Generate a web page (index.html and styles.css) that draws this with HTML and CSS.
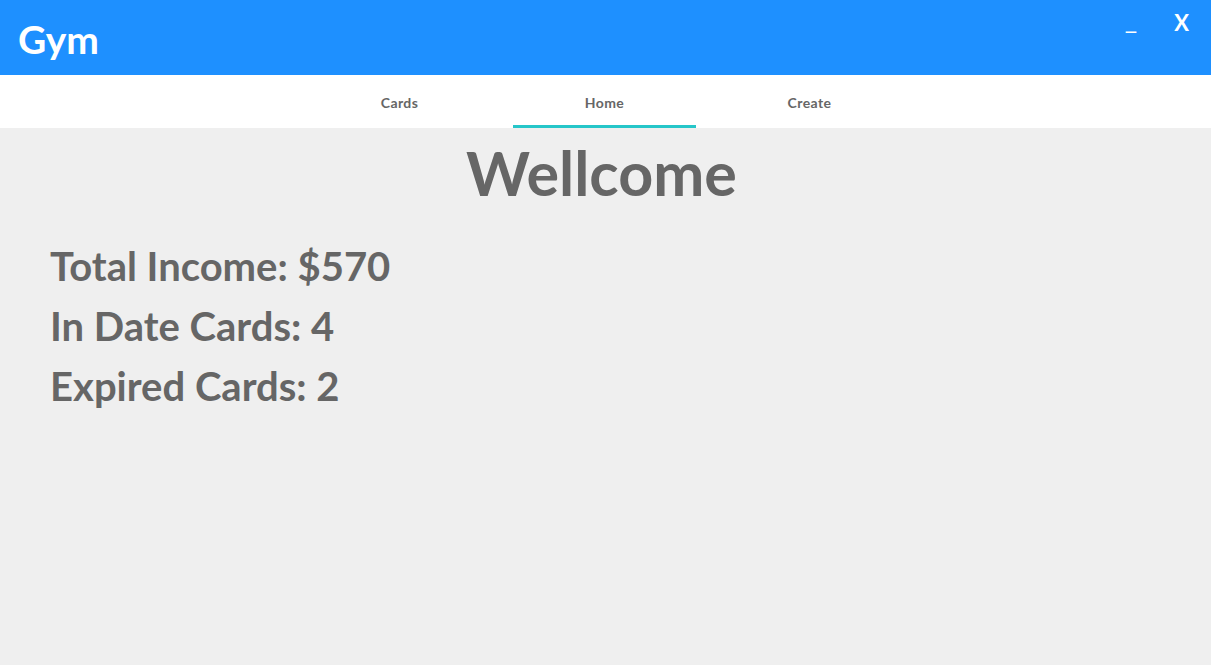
FILE: index.html
```html
<!DOCTYPE html>
<html>
<head>
<meta charset="utf-8">
<link rel="stylesheet" href="styles.css">
</head>
<body>
<header class="titlebar">
  <div class="app-title">Gym</div>
  <div class="window-controls">
    <span class="ctl ctl-min">_</span>
    <span class="ctl ctl-close">X</span>
  </div>
</header>
<nav class="tabs">
  <div class="tab">Cards</div>
  <div class="tab active">Home</div>
  <div class="tab">Create</div>
</nav>
<main class="content">
  <h1 class="welcome">Wellcome</h1>
  <div class="stats">
    <div class="stat">Total Income: $570</div>
    <div class="stat">In Date Cards: 4</div>
    <div class="stat">Expired Cards: 2</div>
  </div>
</main>
</body>
</html>
```
FILE: styles.css
```css
* { box-sizing: border-box; }
html, body { margin: 0; padding: 0; height: 100%; }
body {
  font-family: Lato, "Open Sans", "DejaVu Sans", sans-serif;
  background: #efefef;
  color: #666666;
  display: flex;
  flex-direction: column;
}
.titlebar {
  height: 75px;
  background: #1e90ff;
  color: #ffffff;
  display: flex;
  align-items: flex-start;
  justify-content: space-between;
  padding: 0 22px 0 18px;
}
.app-title {
  font-size: 39px;
  font-weight: 700;
  line-height: 1;
  margin-top: 20px;
}
.window-controls {
  display: flex;
  gap: 37px;
  margin-top: 12px;
}
.ctl { font-size: 22px; font-weight: 700; line-height: 1; }
.ctl-min { font-weight: 400; font-size: 27px; margin-top: -7px; line-height: 1; }
.tabs {
  height: 53px;
  background: #ffffff;
  display: flex;
  justify-content: center;
  padding-right: 2px;
}
.tab {
  width: 205px;
  display: flex;
  align-items: center;
  justify-content: center;
  font-size: 14px;
  font-weight: 700;
  letter-spacing: 0.4px;
  color: #666666;
  padding-top: 1px;
  position: relative;
}
.tab.active::after {
  content: "";
  position: absolute;
  left: 11px;
  right: 11px;
  bottom: 0;
  height: 3px;
  background: #26c6c9;
}
.content { flex: 1; padding: 0 50px; }
.welcome {
  margin: 11px 8px 0 0;
  text-align: center;
  font-size: 61px;
  font-weight: 700;
  line-height: 1.1;
}
.stats {
  margin-top: 36px;
  display: flex;
  flex-direction: column;
  gap: 12px;
}
.stat {
  font-size: 40px;
  font-weight: 700;
  line-height: 48px;
}
```
